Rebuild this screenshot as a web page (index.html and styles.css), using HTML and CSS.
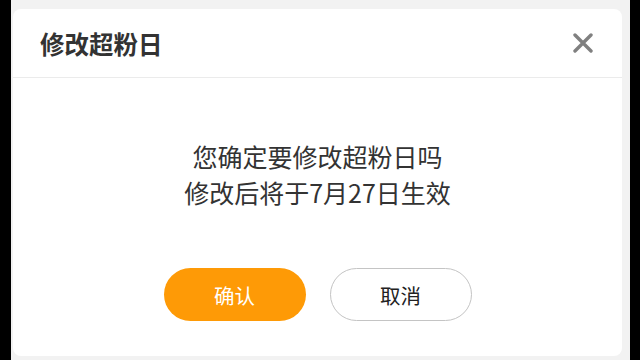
FILE: index.html
```html
<!DOCTYPE html>
<html lang="zh-CN">
<head>
    <meta charset="UTF-8">
    <meta name="viewport" content="width=device-width, initial-scale=1.0">
    <title>修改超粉日</title>
    <link rel="stylesheet" href="styles.css">
</head>
<body>
    <div class="screen">
        <div class="dialog">
            <div class="dialog-header">
                <h2 class="dialog-title">修改超粉日</h2>
                <button class="close-button" aria-label="关闭">
                    <svg width="20" height="20" viewBox="0 0 20 20">
                        <path d="M2 2 L18 18 M18 2 L2 18" stroke="#808080" stroke-width="3.4" stroke-linecap="round"/>
                    </svg>
                </button>
            </div>
            <div class="dialog-body">
                <p class="dialog-message">您确定要修改超粉日吗<br>修改后将于7月27日生效</p>
                <div class="dialog-actions">
                    <button class="action-button confirm">确认</button>
                    <button class="action-button cancel">取消</button>
                </div>
            </div>
        </div>
    </div>
</body>
</html>
```

FILE: styles.css
```css
body, html {
    margin: 0;
    padding: 0;
    height: 100%;
    background: #000;
    font-family: "Noto Sans CJK SC", "Noto Sans", sans-serif;
}
.screen {
    margin-left: 11px;
    width: 619px;
    height: 360px;
    box-sizing: border-box;
    padding: 9px 8px 4px 2px;
    background: #f2f2f2;
}
.dialog {
    background: #fff;
    border-radius: 8px;
    height: 347px;
    display: flex;
    flex-direction: column;
}
.dialog-header {
    height: 68px;
    display: flex;
    align-items: center;
    justify-content: space-between;
    padding: 0 29px 0 27px;
    border-bottom: 1px solid #ebebeb;
}
.dialog-title {
    margin: 0;
    font-size: 24.5px;
    font-weight: bold;
    color: #333;
}
.close-button {
    background: none;
    border: none;
    padding: 0;
    width: 20px;
    height: 20px;
    cursor: pointer;
}
.dialog-body {
    display: flex;
    flex-direction: column;
    align-items: center;
    padding-top: 60px;
}
.dialog-message {
    margin: 0;
    font-size: 25px;
    line-height: 36px;
    text-align: center;
    color: #333;
}
.dialog-actions {
    display: flex;
    gap: 24px;
    margin-top: 58px;
}
.action-button {
    width: 142px;
    height: 53px;
    border-radius: 27px;
    font-family: inherit;
    font-size: 20.5px;
    cursor: pointer;
    box-sizing: border-box;
}
.action-button.confirm {
    background: #fe9a06;
    border: none;
    color: #fff;
}
.action-button.cancel {
    background: #fff;
    border: 1.5px solid #c4c4c4;
    color: #222;
}
```
